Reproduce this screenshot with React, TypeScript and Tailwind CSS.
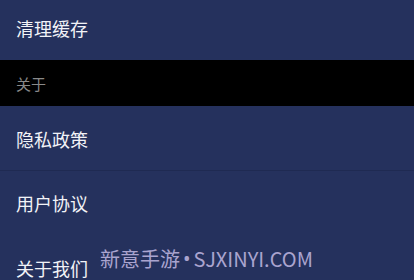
const rows = ['隐私政策', '用户协议', '关于我们'];

export default function App() {
  return (
    <div
      className="relative w-[414px] h-[280px] overflow-hidden bg-[#25315d]"
      style={{ fontFamily: '"Noto Sans CJK SC", "Noto Sans", sans-serif' }}
    >
      <div className="h-[60px] flex items-center pl-4 pb-[4px] text-[18px] text-[#f2f3f7]">
        清理缓存
      </div>
      <div className="h-[46px] flex items-center pl-4 pt-[3px] bg-black text-[15px] text-[#8a8a8a]">
        关于
      </div>
      {rows.map((r, i) => (
        <div
          key={r}
          className={`h-[65px] flex items-center pl-4 text-[18px] text-[#f2f3f7] ${i === 0 ? 'pt-[3px] border-b border-[#1f2a52]' : ''}`}
        >
          {r}
        </div>
      ))}
      <div className="absolute left-[100px] top-[244px] flex items-center text-[20px] text-[#aaa4cf] whitespace-nowrap">
        <span>新意手游</span>
        <span className="mx-[3px] font-['Noto_Sans']">•</span>
        <span>SJXINYI.COM</span>
      </div>
    </div>
  );
}
